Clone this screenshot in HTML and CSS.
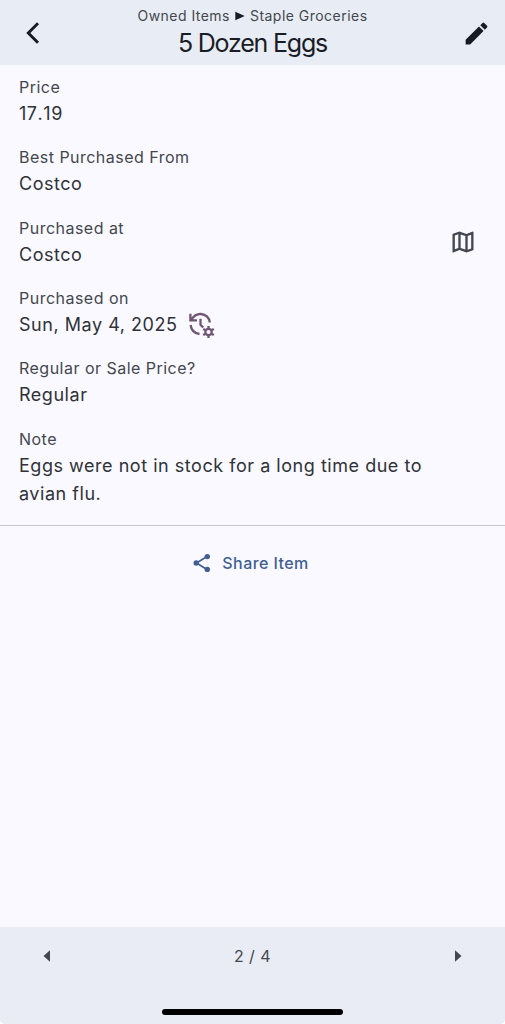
FILE: index.html
```html
<!DOCTYPE html>
<html lang="en">
<head>
<meta charset="utf-8">
<title>5 Dozen Eggs</title>
<link rel="stylesheet" href="styles.css">
</head>
<body>
<div class="screen">
  <header class="topbar">
    <svg class="back" width="24" height="26" viewBox="0 0 24 26"><path d="M17 3.200 7.300 13 17 22.800" fill="none" stroke="#171b23" stroke-width="2.900"/></svg>
    <div class="heading">
      <div class="crumbs"><span>Owned Items</span><svg width="10" height="10" viewBox="0 0 10 10"><path d="M.3.8 9.700 5 .3 9.200z" fill="#171b23"/></svg><span>Staple Groceries</span></div>
      <h1 class="title">5 Dozen Eggs</h1>
    </div>
    <svg class="edit" width="29" height="29" viewBox="0 0 24 24" fill="#171b23"><path d="M3 17.250V21h3.750L17.810 9.940l-3.750-3.750L3 17.250zM20.710 7.040a1 1 0 0 0 0-1.410l-2.340-2.340a1 1 0 0 0-1.410 0l-1.830 1.830 3.750 3.750 1.830-1.830z"/></svg>
  </header>
  <main class="content">
    <section class="field"><div class="label">Price</div><div class="value price">17.19</div></section>
    <section class="field"><div class="label">Best Purchased From</div><div class="value">Costco</div></section>
    <section class="field with-action">
      <div><div class="label">Purchased at</div><div class="value">Costco</div></div>
      <svg class="map" width="28" height="28" viewBox="0 0 24 24" fill="#44474e"><path d="M20.500 3l-.16.03L15 5.100 9 3 3.360 4.900c-.21.07-.36.25-.36.48V20.500c0 .28.22.5.5.5l.16-.03L9 18.900l6 2.100 5.640-1.900c.21-.07.36-.25.36-.48V3.500c0-.28-.22-.5-.5-.5zM10 5.470l4 1.400v11.660l-4-1.400V5.470zm-5 .99l3-1.010v11.700l-3 1.160V6.460zm14 11.080l-3 1.010V6.860l3-1.160v11.840z"/></svg>
    </section>
    <section class="field"><div class="label">Purchased on</div>
      <div class="value date"><span>Sun, May 4, 2025</span>
        <svg width="27" height="27" viewBox="0 0 27 27" fill="none" stroke="#705575" stroke-width="2.300"><path d="M3.500 8.500C6 4.500 9.500 2.800 13 3c5 .3 8.400 4 8.800 8.500M2.600 14c.6 4.800 4 8.300 8.900 9M2.400 2.700v6.600h6.600M12.500 7.700v6l2.700 2.800"/><circle cx="20.500" cy="21" r="3.200"/><path d="M20.500 14.900v2.300m0 7.600v2.200M15.200 17.900l2 1.200m6.600 3.800 2 1.200M25.800 17.900l-2 1.200m-6.600 3.800-2 1.200"/></svg>
      </div></section>
    <section class="field"><div class="label">Regular or Sale Price?</div><div class="value">Regular</div></section>
    <section class="field"><div class="label">Note</div><div class="value">Eggs were not in stock for a long time due to<br>avian flu.</div></section>
  </main>
  <div class="share">
    <svg width="18" height="20" viewBox="0 0 18 20" fill="#415f91"><path d="M14 3.500 3.500 10 14 16.500" fill="none" stroke="#415f91" stroke-width="1.700"/><circle cx="14.300" cy="3.600" r="2.700"/><circle cx="3.200" cy="10" r="2.700"/><circle cx="14.300" cy="16.400" r="2.700"/></svg>
    <span>Share Item</span>
  </div>
  <footer class="bottombar">
    <nav class="pager">
      <svg width="7" height="12" viewBox="0 0 7 12"><path d="M7 .3v11.400L.5 6z" fill="#44474e"/></svg>
      <span>2 / 4</span>
      <svg width="7" height="12" viewBox="0 0 7 12"><path d="M0 .3v11.400L6.500 6z" fill="#44474e"/></svg>
    </nav>
    <div class="home"></div>
  </footer>
</div>
</body>
</html>
```
FILE: styles.css
```css
* { box-sizing: border-box; }
body { margin: 0; background: #fff; font-family: Inter, "Liberation Sans", sans-serif; color: #303238; }
svg { display: block; flex: none; }
.screen { width: 505px; height: 1024px; display: flex; flex-direction: column; background: #f9f9ff; border-radius: 0 0 5px 5px; overflow: hidden; }
.topbar { height: 65px; flex: none; display: flex; justify-content: space-between; align-items: center; background: #e8ecf4; padding: 0 14px 0 21px; }
.edit { margin-top: 1px; }
.heading { display: flex; flex-direction: column; align-items: center; padding: 0 2px 2px 0; }
.crumbs { display: flex; align-items: center; height: 22px; font-size: 14px; letter-spacing: .47px; color: #44474e; }
.crumbs svg { margin: 0 5px; }
.title { margin: 0; font-size: 25px; line-height: 32px; font-weight: 400; letter-spacing: -1.200px; color: #1a1d25; }
.content { height: 461px; flex: none; padding: 10px 19px 0; border-bottom: 1px solid #c6c9d1; }
.field { height: 70.330px; }
.with-action { display: flex; justify-content: space-between; padding-right: 9px; }
.map { margin-top: 12px; }
.label { font-size: 16px; line-height: 24px; letter-spacing: .48px; color: #44474e; }
.value { font-size: 18px; line-height: 28px; letter-spacing: .53px; white-space: nowrap; padding-top: 1px; }
.price { letter-spacing: .55px; font-feature-settings: "kern" 0; }
.date { display: flex; gap: 11px; align-items: center; }
.share { display: flex; justify-content: center; align-items: center; gap: 11px; padding: 23px 3px 0 0; height: 50px; font-size: 16px; font-weight: 500; letter-spacing: .42px; color: #415f91; }
.bottombar { margin-top: auto; height: 97px; background: #e9ecf5; display: flex; flex-direction: column; justify-content: space-between; align-items: center; padding: 19px 43px 9px; }
.pager { width: 100%; display: flex; justify-content: space-between; align-items: center; font-size: 16px; line-height: 20px; letter-spacing: .4px; color: #44474e; }
.home { width: 181px; height: 6px; border-radius: 3px; background: #000; }
```
